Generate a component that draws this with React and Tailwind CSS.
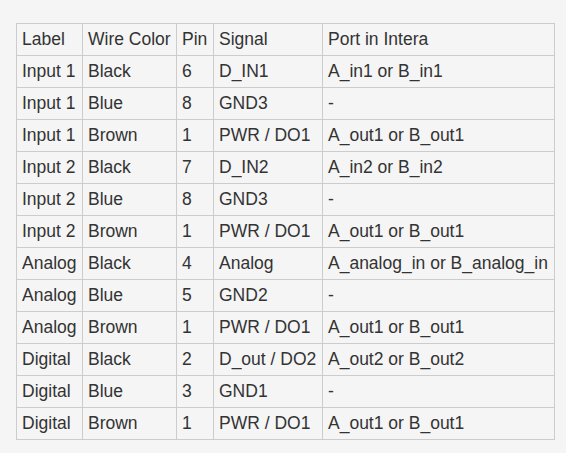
import React from 'react'

const rows = [
  ['Input 1', 'Black', '6', 'D_IN1', 'A_in1 or B_in1'],
  ['Input 1', 'Blue', '8', 'GND3', '-'],
  ['Input 1', 'Brown', '1', 'PWR / DO1', 'A_out1 or B_out1'],
  ['Input 2', 'Black', '7', 'D_IN2', 'A_in2 or B_in2'],
  ['Input 2', 'Blue', '8', 'GND3', '-'],
  ['Input 2', 'Brown', '1', 'PWR / DO1', 'A_out1 or B_out1'],
  ['Analog', 'Black', '4', 'Analog', 'A_analog_in or B_analog_in'],
  ['Analog', 'Blue', '5', 'GND2', '-'],
  ['Analog', 'Brown', '1', 'PWR / DO1', 'A_out1 or B_out1'],
  ['Digital', 'Black', '2', 'D_out / DO2', 'A_out2 or B_out2'],
  ['Digital', 'Blue', '3', 'GND1', '-'],
  ['Digital', 'Brown', '1', 'PWR / DO1', 'A_out1 or B_out1'],
]

const headers = ['Label', 'Wire Color', 'Pin', 'Signal', 'Port in Intera']

// column widths measured from the border lines
const widths = ['w-[66px]', 'w-[94px]', 'w-[37px]', 'w-[109px]', 'w-[232px]']

const cellClass = "border border-[#cccccc] h-[32px] px-[5px] py-0 text-left font-normal whitespace-nowrap"

export default function App() {
  return (
    <div className="min-h-screen bg-[#f5f5f5] pt-[23px] pl-[16px] text-[#333333] text-[17.5px] font-[family-name:Liberation_Sans,Arial,sans-serif]">
      <table className="table-fixed border-collapse w-[538px]">
        <colgroup>
          {widths.map((w, i) => (
            <col key={i} className={w} />
          ))}
        </colgroup>
        <thead>
          <tr>
            {headers.map((h) => (
              <th key={h} className={cellClass}>{h}</th>
            ))}
          </tr>
        </thead>
        <tbody>
          {rows.map((row, i) => (
            <tr key={i}>
              {row.map((cell, j) => (
                <td key={j} className={cellClass}>{cell}</td>
              ))}
            </tr>
          ))}
        </tbody>
      </table>
    </div>
  )
}
